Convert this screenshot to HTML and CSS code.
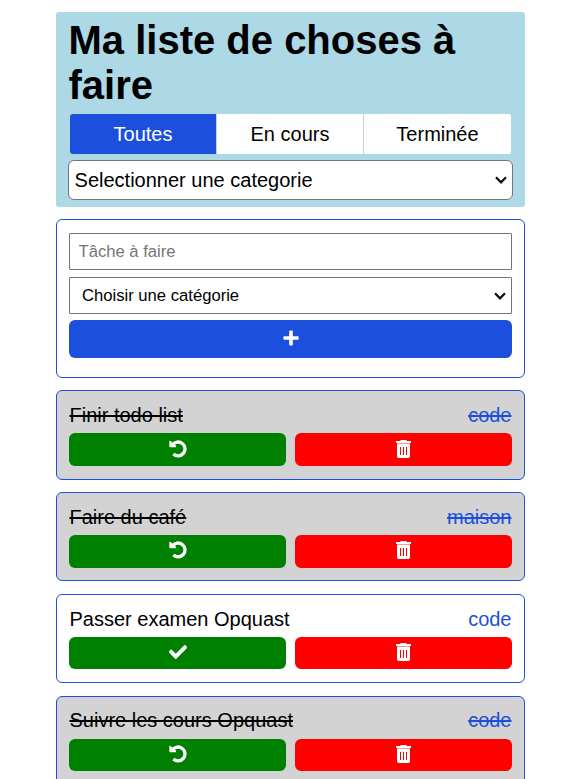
FILE: index.html
```html
<!DOCTYPE html>
<html lang="fr">
<head>
<meta charset="utf-8">
<title>Ma liste de choses à faire</title>
<link rel="stylesheet" href="styles.css">
</head>
<body>
<svg class="sprite" aria-hidden="true">
  <symbol id="undo" viewBox="0 0 18 18"><path d="M3.400 5 A6.900 6.900 0 1 1 4.400 14" fill="none" stroke="#fff" stroke-width="3.300"/><path d="M.3 1.500Q.4.300 1.500.9L3.300 2.500 6.800 5.500Q7.700 7 6.600 7.300H1.100q-.8 0-.8-.8z" fill="#fff"/></symbol>
  <symbol id="check" viewBox="0 0 512 512"><path fill="#fff" d="M173.900 439.400 7.500 273c-10-10-10-26.200 0-36.200l36.200-36.200c10-10 26.200-10 36.200 0L192 312.700 432.100 72.600c10-10 26.200-10 36.200 0l36.200 36.200c10 10 10 26.200 0 36.200L210.100 439.400c-10 10-26.200 10-36.200 0z" stroke="#fff" stroke-width="14"/></symbol>
  <symbol id="trash" viewBox="0 0 15 18"><path fill="#fff" d="M0 1h4.200q.3-1 1-1h4.600q.7 0 1 1H15v2H0z"/><path fill="#fff" fill-opacity=".6" d="M1 3h13v1H1z"/><path fill="#fff" fill-rule="evenodd" d="M1 4h13v12.300q0 1.700-1.700 1.700H2.700Q1 18 1 16.300zM4 7v8h1V7zm3 0v8h1V7zm3 0v8h1V7z"/></symbol>
  <symbol id="plus" viewBox="0 0 16 16"><path fill="#fff" d="M7 .5h2q.8 0 .8.800v4.900h5q.8 0 .8.800v2q0 .8-.8.800h-5v5q0 .8-.8.800H7q-.8 0-.8-.8v-5h-5q-.8 0-.8-.8V7q0-.8.800-.8h5V1.300q0-.8.800-.8z"/></symbol>
</svg>
<main class="app">
  <header class="header">
    <h1 class="title">Ma liste de choses à faire</h1>
    <nav class="tabs">
      <button class="tab active">Toutes</button>
      <button class="tab">En cours</button>
      <button class="tab">Terminée</button>
    </nav>
    <div class="select filter"><span>Selectionner une categorie</span><svg class="chevron" viewBox="0 0 12 8"><path d="M1 1.300l5 5 5-5"/></svg></div>
  </header>
  <form class="card form">
    <input class="field" type="text" placeholder="Tâche à faire">
    <div class="select category"><span>Choisir une catégorie</span><svg class="chevron" viewBox="0 0 12 8"><path d="M1 1.300l5 5 5-5"/></svg></div>
    <button class="btn add" type="button" aria-label="Ajouter"><svg class="icon-plus"><use href="#plus"/></svg></button>
  </form>
  <section class="list">
  <article class="card task done">
    <div class="row"><span class="name">Finir todo list</span><span class="tag">code</span></div>
    <div class="actions"><button class="btn ok"><svg class="icon"><use href="#undo"/></svg></button><button class="btn del"><svg class="icon-trash"><use href="#trash"/></svg></button></div>
  </article>
  <article class="card task done">
    <div class="row"><span class="name">Faire du café</span><span class="tag">maison</span></div>
    <div class="actions"><button class="btn ok"><svg class="icon"><use href="#undo"/></svg></button><button class="btn del"><svg class="icon-trash"><use href="#trash"/></svg></button></div>
  </article>
  <article class="card task">
    <div class="row"><span class="name">Passer examen Opquast</span><span class="tag">code</span></div>
    <div class="actions"><button class="btn ok"><svg class="icon"><use href="#check"/></svg></button><button class="btn del"><svg class="icon-trash"><use href="#trash"/></svg></button></div>
  </article>
  <article class="card task done">
    <div class="row"><span class="name">Suivre les cours Opquast</span><span class="tag">code</span></div>
    <div class="actions"><button class="btn ok"><svg class="icon"><use href="#undo"/></svg></button><button class="btn del"><svg class="icon-trash"><use href="#trash"/></svg></button></div>
  </article>
  </section>
</main>
</body>
</html>
```
FILE: styles.css
```css
* { box-sizing: border-box; }
html { height: 100%; overflow: hidden; }
body {
  margin: 0;
  height: 100%;
  overflow: hidden;
  background: #fff;
  color: #000;
  font: 20px/23px "Liberation Sans", Arial, sans-serif;
}
button, input { font: inherit; margin: 0; }
.sprite { display: none; }
.app { width: 469px; margin: 12px 0 0 56px; }
.header {
  height: 195px;
  padding: 6px 12px 0;
  background: lightblue;
  border-radius: 3px;
}
.title {
  height: 84px;
  margin: 0 0 12px;
  padding-left: .5px;
  font-size: 40px;
  line-height: 45px;
  font-weight: 700;
}
.tabs {
  display: flex;
  height: 40px;
  margin: 0 2px;
  border-radius: 3px;
  overflow: hidden;
}
.tab { flex: 0 0 147px; padding: 0; border: 0; border-right: 1px solid #ccc; background: #fff; color: #000; }
.tab:last-child { flex: 1; border-right: 0; }
.tab.active { background: #1d4fdd; color: #fff; }
.select {
  display: flex;
  align-items: center;
  justify-content: space-between;
  background: #fff;
  border: 1px solid #767676;
}
.chevron { width: 12px; height: 8px; fill: none; stroke: #111; stroke-width: 2.300; }
.filter { height: 40px; margin-top: 6px; padding: 0 5px 0 5.600px; border-radius: 6px; }
.card {
  border: 1px solid #1d4fdd;
  border-radius: 6px;
  padding: 12.500px 12px 0;
}
.form { display: flex; flex-direction: column; height: 159px; margin-top: 12px; padding-top: 13px; }
.field {
  height: 37px;
  padding: 0 8.500px;
  border: 1px solid #767676;
  border-radius: 1px;
  background: #fff;
  font-size: 16.640px;
}
.field::placeholder { color: #757575; }
.category { height: 37px; margin-top: 7px; padding: 0 5px 0 12px; border-radius: 1px; font-size: 16.640px; }
.btn {
  display: flex;
  align-items: center;
  justify-content: center;
  padding: 0;
  border: 0;
  border-radius: 6px;
}
.add { height: 38px; margin-top: 6px; padding-bottom: 3px; background: #1d4fdd; }
.list { display: flex; flex-direction: column; gap: 12.580px; margin-top: 12.260px; }
.task { height: 89.300px; }
.done { background: lightgray; }
.row { display: flex; justify-content: space-between; padding: 0 .5px; }
.tag { color: #1d4fdd; }
.done .row span { text-decoration: line-through; text-decoration-thickness: 2px; }
.actions { display: grid; grid-template-columns: 1fr 1fr; gap: 9px; margin-top: 6.500px; }
.actions .btn { height: 32.420px; padding-bottom: 1.800px; }
.ok { background: green; }
.del { background: red; }
.icon { width: 18px; height: 18px; }
.icon-trash { width: 15px; height: 18px; }
.icon-plus { width: 16px; height: 16px; }
```
